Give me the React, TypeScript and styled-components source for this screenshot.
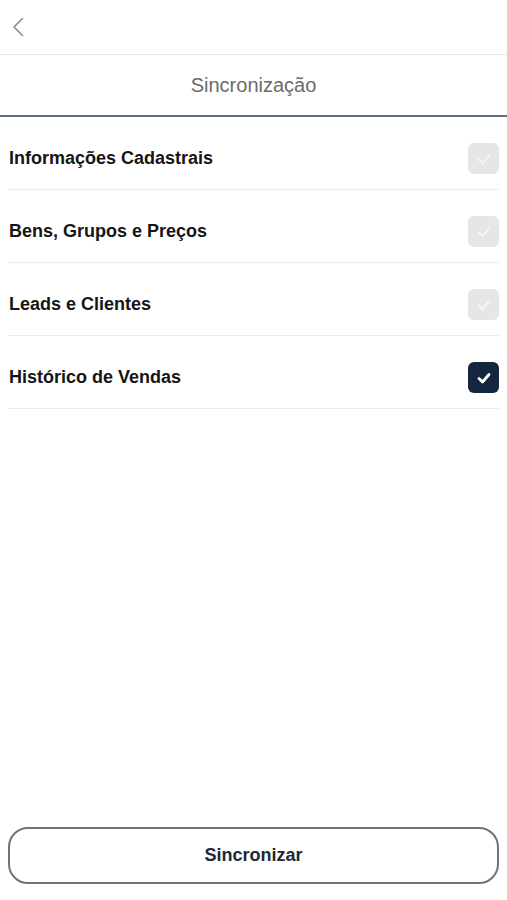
import { FC, useState } from 'react';
import styled, { createGlobalStyle } from 'styled-components';

const GlobalStyle = createGlobalStyle`
    html, body {
        margin: 0;
        padding: 0;
        background: #ffffff;
    }
    body {
        font-family: "Liberation Sans", Arial, sans-serif;
    }
`;

const Screen = styled.div`
    width: 507px;
    height: 900px;
    display: flex;
    flex-direction: column;
    background: #ffffff;
`;

const TopBar = styled.div`
    height: 55px;
    display: flex;
    align-items: center;
    padding-left: 12px;
    border-bottom: 1px solid #e6e6e6;
    box-sizing: border-box;
`;

const BackButton = styled.button`
    background: none;
    border: none;
    padding: 0;
    width: 16px;
    height: 24px;
    cursor: pointer;
    display: flex;
    align-items: center;
`;

const TitleBar = styled.div`
    height: 62px;
    display: flex;
    align-items: center;
    justify-content: center;
    border-bottom: 2px solid #5f6f84;
    box-sizing: border-box;
    font-size: 20px;
    color: #6b6b6b;
`;

const List = styled.div`
    display: flex;
    flex-direction: column;
    padding: 0 8px;
`;

const Row = styled.label`
    display: flex;
    align-items: center;
    justify-content: space-between;
    padding: 26px 0 15px 1px;
    border-bottom: 1px solid #ececec;
    cursor: pointer;
`;

const RowLabel = styled.span`
    font-size: 18px;
    font-weight: bold;
    color: #151515;
`;

const Box = styled.span<{ $active: boolean }>`
    width: 31px;
    height: 31px;
    border-radius: 6px;
    display: flex;
    align-items: center;
    justify-content: center;
    background: ${p => (p.$active ? '#13263d' : '#e6e6e6')};
`;

const Spacer = styled.div`
    flex: 1;
`;

const Footer = styled.div`
    padding: 0 8px 16px 8px;
`;

const SyncButton = styled.button`
    width: 100%;
    height: 57px;
    border: 2px solid #6e747b;
    border-radius: 20px;
    background: #ffffff;
    font-family: "Liberation Sans", Arial, sans-serif;
    font-size: 18px;
    font-weight: bold;
    color: #1e2935;
    cursor: pointer;
`;

const items = [
    { label: 'Informações Cadastrais', active: false },
    { label: 'Bens, Grupos e Preços', active: false },
    { label: 'Leads e Clientes', active: false },
    { label: 'Histórico de Vendas', active: true },
];

const Check: FC<{ active: boolean }> = ({ active }) => (
    <svg width="18" height="18" viewBox="0 0 18 18">
        <path
            d="M4 9.5 L7.5 13 L14 5.5"
            fill="none"
            stroke={active ? '#ffffff' : '#f7f7f7'}
            strokeWidth={active ? 2.8 : 1.8}
            strokeLinecap="round"
            strokeLinejoin="round"
        />
    </svg>
);

export default function App() {
    const [state, setState] = useState(items.map(x => x.active));

    return (
        <Screen>
            <GlobalStyle />
            <TopBar>
                <BackButton aria-label="Voltar">
                    <svg width="12" height="20" viewBox="0 0 12 20">
                        <path d="M10.5 1.5 L2 10 L10.5 18.5" fill="none" stroke="#8a8a8a" strokeWidth="1.6" strokeLinecap="round" strokeLinejoin="round" />
                    </svg>
                </BackButton>
            </TopBar>
            <TitleBar>Sincronização</TitleBar>
            <List>
                {items.map((x, i) => (
                    <Row key={x.label} onClick={() => setState(s => s.map((v, j) => (j === i ? !v : v)))}>
                        <RowLabel>{x.label}</RowLabel>
                        <Box $active={state[i]}>
                            <Check active={state[i]} />
                        </Box>
                    </Row>
                ))}
            </List>
            <Spacer />
            <Footer>
                <SyncButton type="button">Sincronizar</SyncButton>
            </Footer>
        </Screen>
    );
}
